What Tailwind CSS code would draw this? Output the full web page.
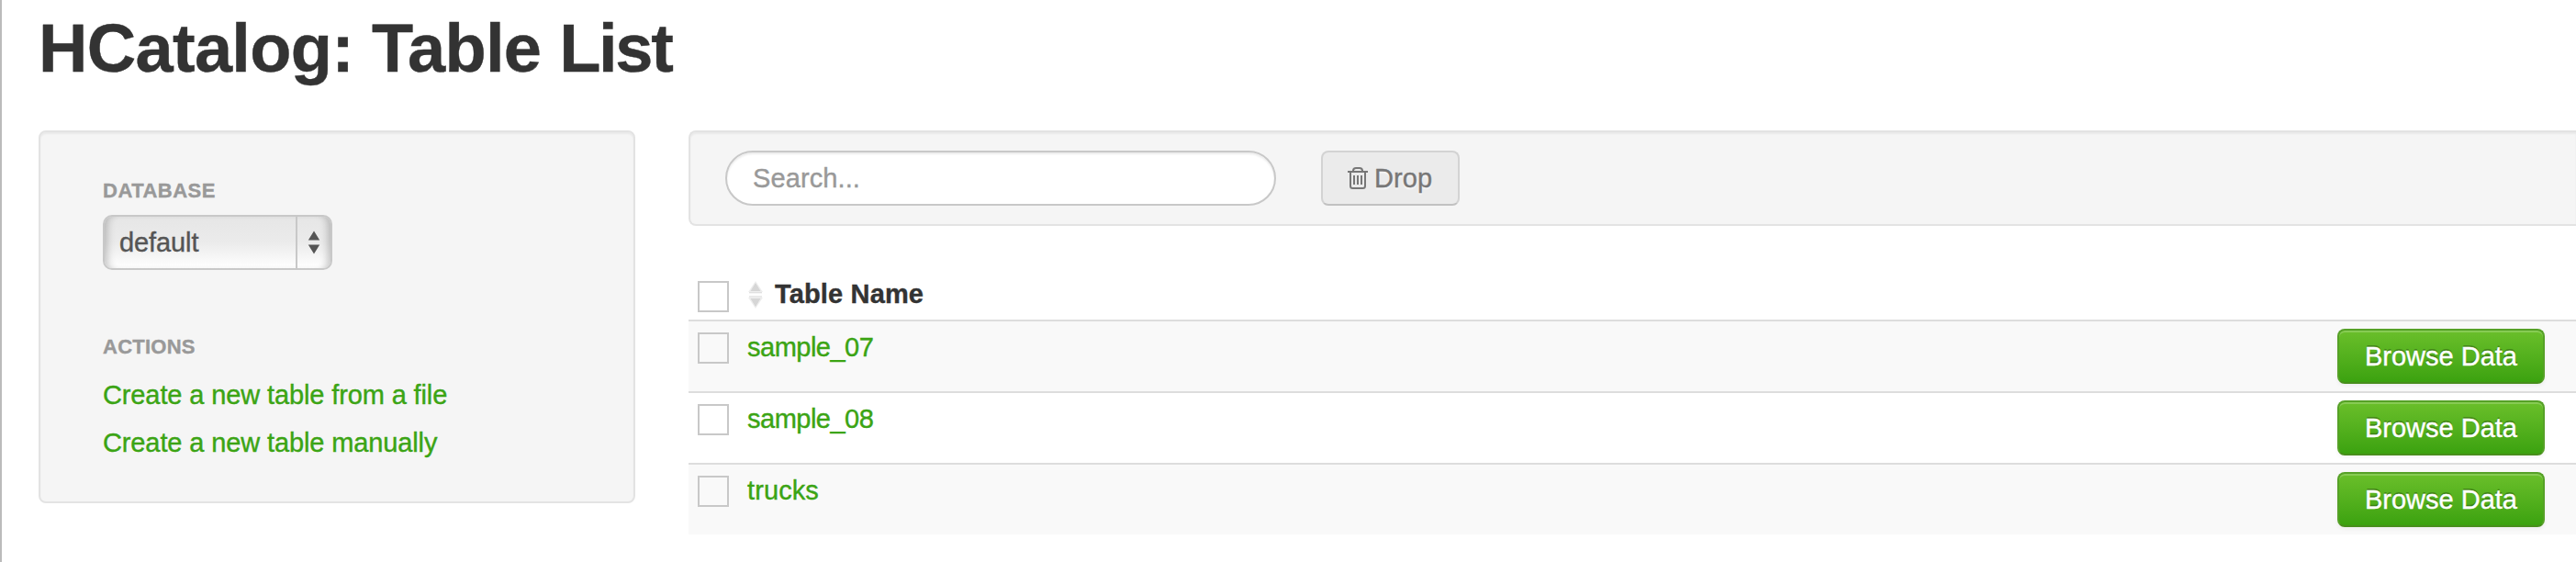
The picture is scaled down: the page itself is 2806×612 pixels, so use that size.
<!DOCTYPE html>
<html lang="en">
<head>
<meta charset="utf-8">
<title>HCatalog: Table List</title>
<script src="https://cdn.jsdelivr.net/npm/@tailwindcss/browser@4"></script>
</head>
<body class="h-[612px] w-[2806px] overflow-hidden border-l-2 border-[#bbb] bg-white font-['Liberation_Sans',Arial,sans-serif] text-[29px] leading-10 text-[#333] [-webkit-text-stroke-width:0.4px]">
<h1 class="ml-10 h-[142px] pt-[13px] text-[74px] leading-[80px] font-bold tracking-[-2.3px] whitespace-nowrap"><span class="tracking-[-0.7px]">HCatalog: Table </span>List</h1>
<div class="flex items-start gap-[58px] pl-10">
  <aside class="h-[406px] w-[650px] shrink-0 rounded-lg border-2 border-[#e3e3e3] bg-[#f5f5f5] pt-[46px] pl-[68px] shadow-[inset_0_2px_2px_rgba(0,0,0,0.05)]">
    <h2 class="h-11 text-[22px] leading-9 font-bold tracking-[0.5px] text-[#999]">DATABASE</h2>
    <div class="flex h-[60px] w-[250px] items-center rounded-[10px] border-2 border-[#c8c8c8] bg-linear-to-b from-[#e6e6e6] via-[#ebebeb] to-white shadow-[inset_9px_0_8px_-6px_rgba(0,0,0,0.22),inset_-9px_0_8px_-6px_rgba(0,0,0,0.22)]">
      <span class="flex-1 pl-4 tracking-[-0.1px] text-[#555]">default</span>
      <span class="flex h-full w-[38px] items-center justify-center border-l-2 border-[#c8c8c8]">
        <svg class="h-[26px] w-[14px]" viewBox="0 0 14 26" fill="#555"><path d="M7 0.5 13.2 10.500H0.8zM7 25.500 0.8 15.500H13.2z"/></svg>
      </span>
    </div>
    <h2 class="mt-[66px] h-[50px] text-[22px] leading-9 font-bold tracking-[0.25px] text-[#999]">ACTIONS</h2>
    <nav class="flex flex-col gap-3 text-[#3ba414]">
      <a class="tracking-[-0.12px]">Create a new table from a file</a>
      <a class="tracking-[-0.12px]">Create a new table manually</a>
    </nav>
  </aside>
  <main class="min-w-0 flex-1">
    <div class="flex h-[104px] items-center gap-[49px] rounded-l-lg border-y-2 border-l-2 border-[#e3e3e3] bg-[#f5f5f5] pl-[38px] shadow-[inset_0_2px_2px_rgba(0,0,0,0.05)]">
      <div class="flex h-[60px] w-[600px] items-center rounded-full border-2 border-[#c8c8c8] bg-white pl-7 tracking-[0.1px] text-[#999] shadow-[inset_0_2px_2px_rgba(0,0,0,0.075)]">Search...</div>
      <div class="flex h-[60px] w-[151px] items-center rounded-lg border-2 border-[#d3d3d3] border-b-[#c1c1c1] bg-[#ebebeb] pl-[27px] text-[#777] [text-shadow:0_2px_2px_rgba(255,255,255,0.75)]">
        <svg class="mr-[7px] h-6 w-[22px]" viewBox="0 0 22 24" fill="none" stroke="#777" stroke-width="2"><path d="M0 5H22M6 5V3.500Q6.500 1 9 1H13Q15.500 1 16 3.500V5M3 5V20.500Q3 23 5.500 23H16.500Q19 23 19 20.500V5M7 9V19M11 9V19M15 9V19"/></svg>
        <span class="tracking-[0.1px]">Drop</span>
      </div>
    </div>
    <div class="mt-[46px] flex h-[58px] border-b-2 border-[#ddd] pl-[10px]">
      <span class="mt-[14px] size-[34px] border-2 border-[#c8c8c8]"></span>
      <svg class="mt-[14px] ml-5 h-[30px] w-[18px]" viewBox="0 0 18 30"><path d="M9 0 17 12H1zM9 30 1 18H17z" fill="#eee"/><path d="M9 2 14.500 11H3.500zM2 12.300H16V13.300H2zM2 16.500H16V17.500H2zM9 28 3.500 19H14.500z" fill="#d6d6d6"/></svg>
      <span class="mt-2 ml-3 font-bold tracking-[0.15px]">Table Name</span>
    </div>
    <div class="flex h-[78px] border-b-2 border-[#ddd] bg-[#f9f9f9] pr-[34px] pl-[10px]">
      <span class="mt-3 size-[34px] border-2 border-[#c8c8c8]"></span>
      <a class="mt-2 ml-5 flex-1 tracking-[-0.5px] text-[#3ba414]">sample_07</a>
      <button class="mt-2 h-[60px] w-[226px] rounded-lg border-2 border-[#56a127] border-b-[#488e1c] bg-linear-to-b from-[#6abf2a] to-[#3ba20f] text-center text-white shadow-[inset_0_2px_0_rgba(255,255,255,0.2),0_2px_4px_rgba(0,0,0,0.05)] [text-shadow:0_-2px_0_rgba(0,0,0,0.25)]">Browse Data</button>
    </div>
    <div class="flex h-[78px] border-b-2 border-[#ddd] pr-[34px] pl-[10px]">
      <span class="mt-3 size-[34px] border-2 border-[#c8c8c8]"></span>
      <a class="mt-2 ml-5 flex-1 tracking-[-0.5px] text-[#3ba414]">sample_08</a>
      <button class="mt-2 h-[60px] w-[226px] rounded-lg border-2 border-[#56a127] border-b-[#488e1c] bg-linear-to-b from-[#6abf2a] to-[#3ba20f] text-center text-white shadow-[inset_0_2px_0_rgba(255,255,255,0.2),0_2px_4px_rgba(0,0,0,0.05)] [text-shadow:0_-2px_0_rgba(0,0,0,0.25)]">Browse Data</button>
    </div>
    <div class="flex h-[76px] bg-[#f9f9f9] pr-[34px] pl-[10px]">
      <span class="mt-3 size-[34px] border-2 border-[#c8c8c8]"></span>
      <a class="mt-2 ml-5 flex-1 tracking-[0.1px] text-[#3ba414]">trucks</a>
      <button class="mt-2 h-[60px] w-[226px] rounded-lg border-2 border-[#56a127] border-b-[#488e1c] bg-linear-to-b from-[#6abf2a] to-[#3ba20f] text-center text-white shadow-[inset_0_2px_0_rgba(255,255,255,0.2),0_2px_4px_rgba(0,0,0,0.05)] [text-shadow:0_-2px_0_rgba(0,0,0,0.25)]">Browse Data</button>
    </div>
  </main>
</div>
</body>
</html>
